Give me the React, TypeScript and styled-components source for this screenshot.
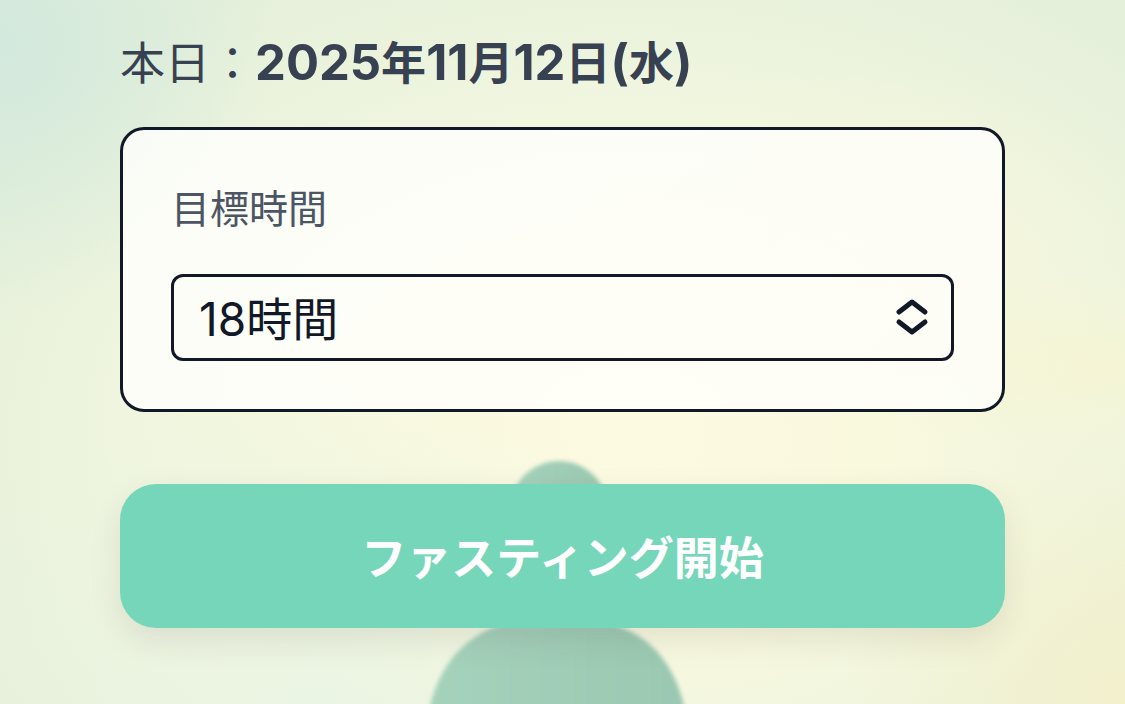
import React, { useState } from "react";
import styled, { createGlobalStyle } from "styled-components";

const GlobalStyle = createGlobalStyle`
  *, *::before, *::after { box-sizing: border-box; }
  body {
    margin: 0;
    font-family: Inter, "Noto Sans CJK JP", sans-serif;
    color: #374151;
  }
`;

const Page = styled.main`
  position: relative;
  min-height: 100vh;
  padding: 30px 120px 76px;
  overflow: hidden;
  isolation: isolate;
  background:
    radial-gradient(circle at 0% 6%, rgba(208, 232, 221, 0.9) 0%, rgba(208, 232, 221, 0) 21%),
    radial-gradient(circle at 100% 100%, #f3f0cc 0%, rgba(243, 240, 204, 0) 22%),
    radial-gradient(ellipse at 98% 52%, #f5f5d5 0%, rgba(245, 245, 213, 0) 18%),
    radial-gradient(ellipse at 76% 34%, rgba(247, 246, 219, 0.9) 0%, rgba(247, 246, 219, 0) 26%),
    radial-gradient(ellipse at 28% 100%, #ebf5e3 0%, rgba(235, 245, 227, 0) 34%),
    radial-gradient(ellipse at 56% 62%, #fdfae2 0%, #f9f9de 28%, #f1f6df 52%, #e5f0da 84%);
`;

const Figure = styled.svg`
  position: absolute;
  z-index: -1;
  top: 440px;
  left: 50%;
  width: 320px;
  height: 320px;
  margin-left: -166px;
`;

const Today = styled.p`
  display: flex;
  align-items: baseline;
  margin: 0 0 29px;
  font-size: 45px;
  line-height: 68px;
  white-space: nowrap;
`;

const TodayDate = styled.time`
  font-weight: 700;
`;

const Digits = styled.span`
  font-size: 49px;
  line-height: 1;
`;

const Card = styled.section`
  padding: 47px 48px 48px;
  border: 3px solid #111827;
  border-radius: 24px;
  background: rgba(255, 255, 252, 0.8);
`;

const FieldLabel = styled.label`
  display: block;
  margin-bottom: 33px;
  font-size: 39px;
  line-height: 64px;
  color: #4b5563;
`;

const SelectBox = styled.div`
  position: relative;
`;

const Select = styled.select`
  display: block;
  width: 100%;
  height: 87px;
  padding: 2px 72px 0 25px;
  border: 3px solid #111827;
  border-radius: 12px;
  appearance: none;
  background: transparent;
  font: inherit;
  font-size: 46px;
  color: #111827;
`;

const SelectArrows = styled.svg`
  position: absolute;
  top: 24px;
  right: 24px;
  width: 36px;
  height: 40px;
  pointer-events: none;
`;

const StartButton = styled.button`
  display: block;
  width: 100%;
  height: 144px;
  margin-top: 72px;
  padding: 0 0 2px;
  border: 0;
  border-radius: 36px;
  background: #76d6ba;
  box-shadow: 0 12px 32px rgba(60, 40, 40, 0.1);
  font: inherit;
  font-size: 45px;
  font-weight: 600;
  color: #fff;
  cursor: pointer;
`;

const hourOptions = [12, 14, 16, 18, 20, 24];

export default function App() {
  const [hours, setHours] = useState(18);

  return (
    <>
      <GlobalStyle />
      <Page>
        <Figure viewBox="0 0 320 320" aria-hidden="true">
          <defs>
            <linearGradient id="figure-fill" x1="0" x2="1" y1="0" y2="0">
              <stop offset="0" stopColor="#a6d2bc" />
              <stop offset="1" stopColor="#9ac8b1" />
            </linearGradient>
            <filter id="figure-soft">
              <feGaussianBlur stdDeviation="2" />
            </filter>
          </defs>
          <g fill="url(#figure-fill)" filter="url(#figure-soft)">
            <circle cx="162" cy="70" r="49" />
            <path d="M32 270C44 215 80 184 130 180H190C243 184 276 215 288 270V320H32Z" />
          </g>
        </Figure>

        <Today>
          <span>本日：</span>
          <TodayDate dateTime="2025-11-12">
            <Digits>2025</Digits>年<Digits>11</Digits>月<Digits>12</Digits>日<Digits>(</Digits>水<Digits>)</Digits>
          </TodayDate>
        </Today>

        <Card>
          <FieldLabel htmlFor="goal-hours">目標時間</FieldLabel>
          <SelectBox>
            <Select
              id="goal-hours"
              value={hours}
              onChange={(event) => setHours(Number(event.target.value))}
            >
              {hourOptions.map((hour) => (
                <option key={hour} value={hour}>
                  {hour}時間
                </option>
              ))}
            </Select>
            <SelectArrows
              viewBox="0 0 36 40"
              fill="none"
              stroke="#111827"
              strokeWidth="5"
              strokeLinecap="round"
              strokeLinejoin="round"
              aria-hidden="true"
            >
              <path d="M5 14L18 4L31 14M5 24L18 34L31 24" />
            </SelectArrows>
          </SelectBox>
        </Card>

        <StartButton type="button">ファスティング開始</StartButton>
      </Page>
    </>
  );
}
